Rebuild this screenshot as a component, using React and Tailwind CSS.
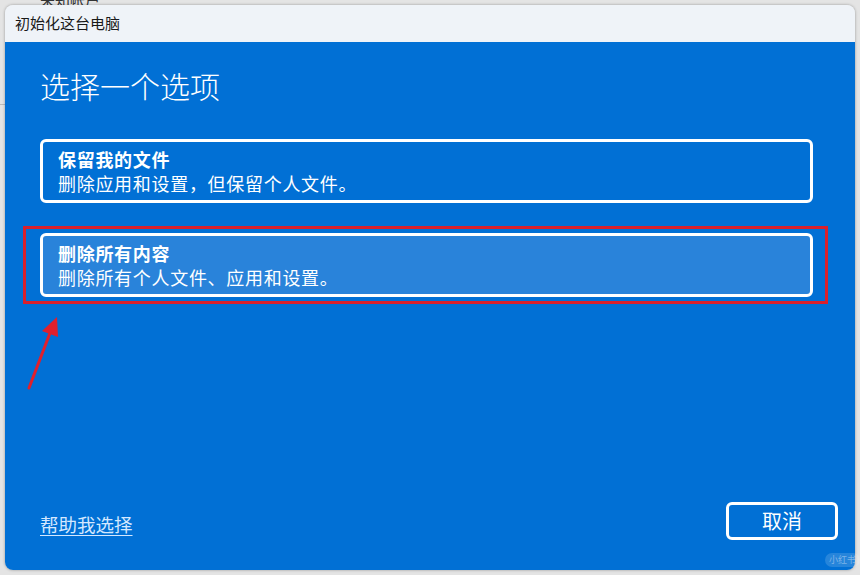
const FONT = { fontFamily: '"Noto Sans CJK SC", "Noto Sans", sans-serif' };

const Option = ({ title, desc, active }) => (
  <div
    className={`h-[64px] rounded-[6px] border-[3px] border-white px-[15px] flex flex-col justify-center ${
      active ? "bg-[#2983da]" : "bg-transparent"
    }`}
  >
    <div className="text-[18px] leading-[24px] tracking-[0.7px] font-bold text-white">{title}</div>
    <div className="text-[18px] leading-[24px] tracking-[0.7px] text-white">{desc}</div>
  </div>
);

export default function App() {
  return (
    <div className="relative w-[860px] h-[575px] overflow-hidden bg-[#e4e4e4]" style={FONT}>
      {/* page behind the dialog */}
      <div className="absolute left-[40px] -top-[11px] text-[15px] text-[#333]">未知帐户</div>
      <div className="absolute left-0 top-[65px] w-[5px] h-[40px] border-b border-[#bbb]" />

      <div className="absolute left-[5px] top-[5px] w-[850px] h-[565px] rounded-[8px] overflow-hidden flex flex-col shadow-[0_0_3px_rgba(0,0,0,0.35)]">
        <div className="h-[37px] bg-[#eff3f8] flex items-center px-[10px] text-[15px] text-[#1a1a1a]">
          初始化这台电脑
        </div>
        <div className="flex-1 bg-[#0170d5] flex flex-col px-[35px] pt-[23px] pb-[30px]">
          <h1 className="text-[30px] leading-[40px] font-light text-white">选择一个选项</h1>

          <div className="mt-[34px] w-[773px]">
            <Option title="保留我的文件" desc="删除应用和设置，但保留个人文件。" />
          </div>

          <div className="mt-[23px] -ml-[17px] w-[805px] border-[3px] border-[#d8202c] py-[4px] pl-[14px] pr-[12px]">
            <Option active title="删除所有内容" desc="删除所有个人文件、应用和设置。" />
          </div>

          <div className="flex-1" />

          <div className="flex items-end justify-between -mr-[18px]">
            <a className="text-[18.5px] leading-[24px] text-[#d4e8ff] underline underline-offset-[3px] mb-[4px]">
              帮助我选择
            </a>
            <button className="w-[112px] h-[38px] rounded-[6px] border-[3px] border-white text-[20px] text-white">
              取消
            </button>
          </div>
        </div>
      </div>

      {/* annotation arrow */}
      <svg className="absolute left-0 top-0" width="860" height="575">
        <line x1="29" y1="388" x2="50" y2="333" stroke="#e0202c" strokeWidth="3" strokeLinecap="round" />
        <polygon points="57,317 42,331 58,337" fill="#e0202c" />
      </svg>

      <div className="absolute left-[825px] top-[553px] px-[4px] rounded-full bg-white/15 text-[9px] text-white/40">小红书</div>
    </div>
  );
}
